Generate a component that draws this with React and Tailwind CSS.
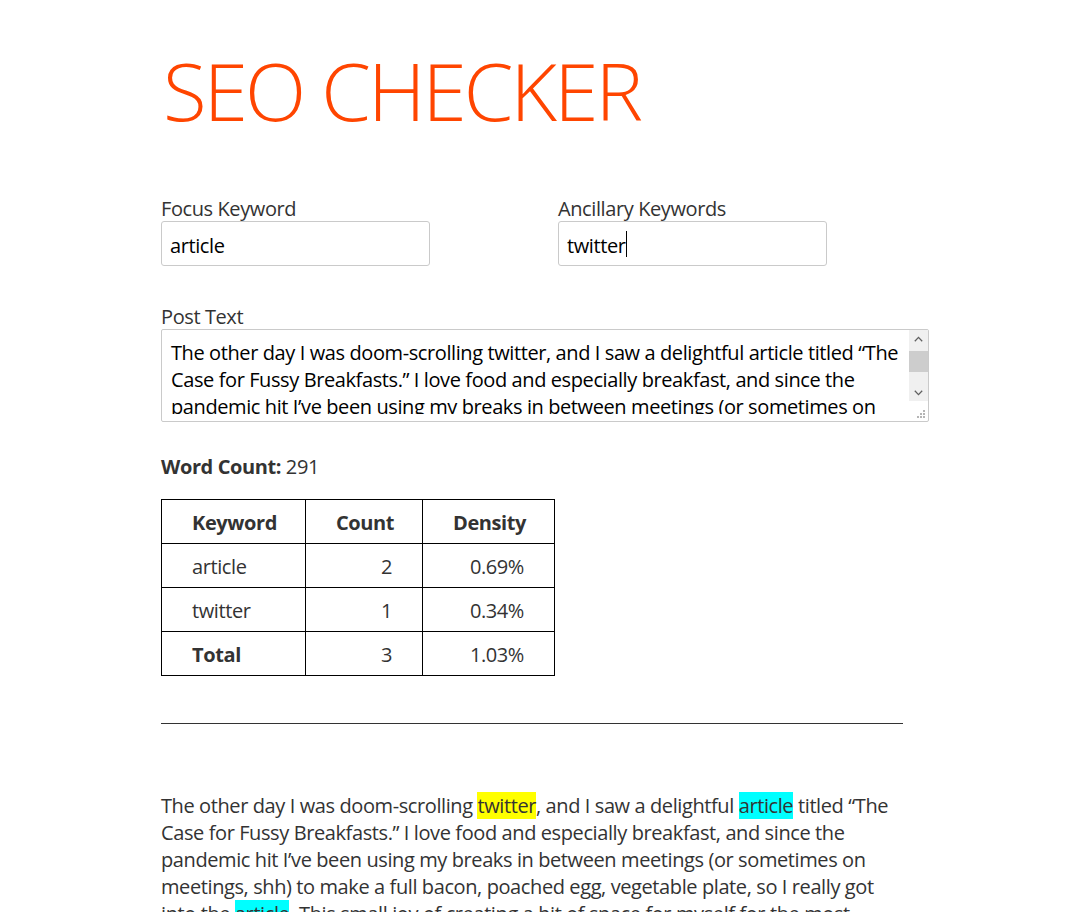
const postText =
  "The other day I was doom-scrolling twitter, and I saw a delightful article titled “The Case for Fussy Breakfasts.” I love food and especially breakfast, and since the pandemic hit I’ve been using my breaks in between meetings (or sometimes on meetings, shh) to make a full bacon, poached egg, vegetable plate, so I really got into the article. This small joy of creating a bit of space for myself for the most important meal of the day has become something I look forward to every single morning, even on the busiest days.";

function Chevron({ up }) {
  return (
    <svg width="9" height="6" viewBox="0 0 9 6" fill="none">
      <path
        d={up ? "M0.8 5.2 L4.5 1.4 L8.2 5.2" : "M0.8 0.8 L4.5 4.6 L8.2 0.8"}
        stroke="#606060"
        strokeWidth="1.3"
      />
    </svg>
  );
}

function Grip() {
  return (
    <svg width="9" height="9" viewBox="0 0 9 9">
      <rect x="6" y="0" width="2" height="2" fill="#b5b5b5" />
      <rect x="3" y="3" width="2" height="2" fill="#b5b5b5" />
      <rect x="6" y="3" width="2" height="2" fill="#b5b5b5" />
      <rect x="0" y="6" width="2" height="2" fill="#b5b5b5" />
      <rect x="3" y="6" width="2" height="2" fill="#b5b5b5" />
      <rect x="6" y="6" width="2" height="2" fill="#b5b5b5" />
    </svg>
  );
}

export default function App() {
  return (
    <div className="min-h-screen bg-white font-['Open_Sans',sans-serif] text-[20px] tracking-[-0.4px] text-[#333]">
      <div className="pl-[161px] pt-[50px] pb-16">
        <h1 className="pl-[2px] text-[80px] leading-[80px] font-light tracking-[-2.9px] text-[#ff4500]">
          SEO CHECKER
        </h1>

        <div className="mt-[65px] flex">
          <div className="w-[397px]">
            <label className="block pt-[1px] leading-[25px]">Focus Keyword</label>
            <input
              readOnly
              value="article"
              className="block w-[269px] h-[45px] rounded-[3px] border border-[#cacaca] bg-white pl-[8px] pr-2 pt-[3px] text-[20px] tracking-[-0.4px] text-black outline-none"
            />
          </div>
          <div className="w-[269px]">
            <label className="block pt-[1px] leading-[25px]">Ancillary Keywords</label>
            <div className="relative">
              <input
                readOnly
                value="twitter"
                className="block w-[269px] h-[45px] rounded-[3px] border border-[#cacaca] bg-white pl-[8px] pr-2 pt-[3px] text-[20px] tracking-[-0.4px] text-black outline-none"
              />
              <div className="pointer-events-none absolute inset-0 flex items-center pl-[9px] pt-[1px]">
                <span className="invisible">twitter</span>
                <span className="block w-px h-[26px] bg-black"></span>
              </div>
            </div>
          </div>
        </div>

        <div className="mt-[37px]">
          <label className="block pt-[1px] leading-[25px]">Post Text</label>
          <div className="flex w-[768px] h-[93px] rounded-[2px] border border-[#cacaca] bg-white">
            <div className="flex-1">
              <div className="h-[84px] overflow-hidden pl-[9px] pr-[2px] pt-[9px] leading-[27px] tracking-[-0.4px] text-black">
                {postText}
              </div>
            </div>
            <div className="flex w-[19px] flex-col">
              <div className="flex h-[71px] flex-col bg-[#f0f0f0]">
                <div className="flex h-[17px] items-center justify-center">
                  <Chevron up />
                </div>
                <div className="mt-[4px] h-[21px] bg-[#cdcdcd]"></div>
                <div className="flex-1"></div>
                <div className="flex h-[17px] items-center justify-center">
                  <Chevron />
                </div>
              </div>
              <div className="flex flex-1 items-end justify-end pb-[2px] pr-[2px]">
                <Grip />
              </div>
            </div>
          </div>
        </div>

        <p className="mt-[31px] leading-[27px]">
          <span className="font-bold">Word Count:</span> 291
        </p>

        <table className="mt-[19px] w-[393px] table-fixed border-collapse border border-black leading-[27px]">
          <colgroup>
            <col className="w-[144px]" />
            <col className="w-[117px]" />
            <col className="w-[132px]" />
          </colgroup>
          <thead>
            <tr className="h-[44px]">
              <th className="border border-black px-[30px] pt-[2px] text-left font-bold">Keyword</th>
              <th className="border border-black px-[30px] pt-[2px] text-right font-bold">Count</th>
              <th className="border border-black px-[30px] pt-[2px] text-right font-bold">Density</th>
            </tr>
          </thead>
          <tbody>
            <tr className="h-[44px]">
              <td className="border border-black px-[30px] pt-[2px]">article</td>
              <td className="border border-black px-[30px] pt-[2px] text-right">2</td>
              <td className="border border-black px-[30px] pt-[2px] text-right">0.69%</td>
            </tr>
            <tr className="h-[44px]">
              <td className="border border-black px-[30px] pt-[2px]">twitter</td>
              <td className="border border-black px-[30px] pt-[2px] text-right">1</td>
              <td className="border border-black px-[30px] pt-[2px] text-right">0.34%</td>
            </tr>
            <tr className="h-[44px]">
              <td className="border border-black px-[30px] pt-[2px] font-bold">Total</td>
              <td className="border border-black px-[30px] pt-[2px] text-right">3</td>
              <td className="border border-black px-[30px] pt-[2px] text-right">1.03%</td>
            </tr>
          </tbody>
        </table>

        <hr className="mt-[47px] w-[742px] border-0 border-t border-[#333]" />

        <p className="mt-[68px] w-[742px] leading-[27px]">
          The other day I was doom-scrolling <mark className="bg-[#ffff00] text-[#333]">twitter</mark>, and I saw a delightful{" "}
          <mark className="bg-[#00ffff] text-[#333]">article</mark> titled “The Case for Fussy Breakfasts.” I love food and
          especially breakfast, and since the pandemic hit I’ve been using my breaks in between meetings (or sometimes on
          meetings, shh) to make a full bacon, poached egg, vegetable plate, so I really got into the{" "}
          <mark className="bg-[#00ffff] text-[#333]">article</mark>. This small joy of creating a bit of space for myself for the
          most important meal of the day has become something I look forward to every single morning, even on the busiest days.
        </p>
      </div>
    </div>
  );
}
